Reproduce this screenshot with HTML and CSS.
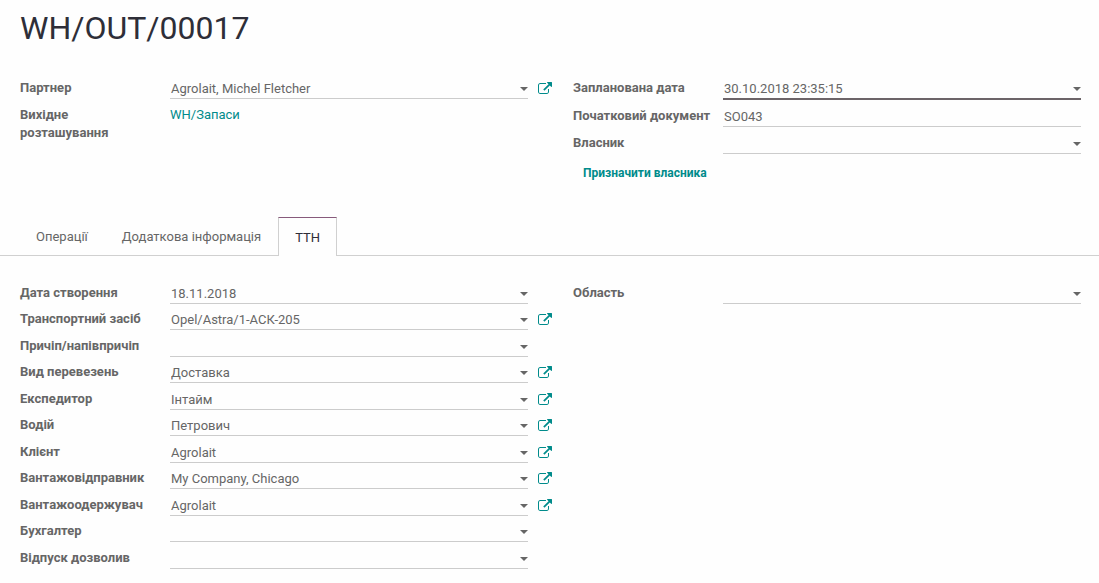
FILE: index.html
```html
<!DOCTYPE html>
<html lang="uk">
<head>
<meta charset="utf-8">
<title>WH/OUT/00017</title>
<link rel="stylesheet" href="styles.css">
</head>
<body>
<svg class="defs" aria-hidden="true">
  <symbol id="external" viewBox="0 0 1792 1792">
    <path d="M1408 928v320q0 119-84.500 203.500t-203.500 84.500h-832q-119 0-203.500-84.500t-84.500-203.500v-832q0-119 84.500-203.500t203.500-84.500h704q14 0 23 9t9 23v64q0 14-9 23t-23 9h-704q-66 0-113 47t-47 113v832q0 66 47 113t113 47h832q66 0 113-47t47-113v-320q0-14 9-23t23-9h64q14 0 23 9t9 23zm384-864v512q0 26-19 45t-45 19-45-19l-176-176-652 652q-10 10-23 10t-23-10l-114-114q-10-10-10-23t10-23l652-652-176-176q-19-19-19-45t19-45 45-19h512q26 0 45 19t19 45z"/>
  </symbol>
</svg>
<main class="sheet">
  <h1 class="title">WH/OUT/00017</h1>

  <section class="groups">
    <div class="group">
      <div class="row">
        <label class="label" for="partner">Партнер</label>
        <div class="field drop"><select class="control" id="partner"><option>Agrolait, Michel Fletcher</option></select></div>
        <button class="open" type="button" aria-label="Відкрити"><svg><use href="#external"/></svg></button>
      </div>
      <div class="row">
        <span class="label label-narrow">Вихідне розташування</span>
        <a class="link" href="#">WH/Запаси</a>
      </div>
    </div>
    <div class="group">
      <div class="row">
        <label class="label" for="planned">Запланована дата</label>
        <div class="field drop required"><input class="control" id="planned" type="text" value="30.10.2018 23:35:15"></div>
      </div>
      <div class="row">
        <label class="label" for="origin">Початковий документ</label>
        <div class="field"><input class="control" id="origin" type="text" value="SO043"></div>
      </div>
      <div class="row">
        <label class="label" for="owner">Власник</label>
        <div class="field drop"><select class="control" id="owner"><option></option></select></div>
      </div>
      <button class="assign" type="button">Призначити власника</button>
    </div>
  </section>

  <nav class="tabs" role="tablist">
    <button class="tab" type="button" role="tab">Операції</button>
    <button class="tab" type="button" role="tab">Додаткова інформація</button>
    <button class="tab active" type="button" role="tab" aria-selected="true">ТТН</button>
  </nav>

  <section class="groups">
    <div class="group dense">
      <div class="row">
        <label class="label" for="created">Дата створення</label>
        <div class="field drop"><input class="control" id="created" type="text" value="18.11.2018"></div>
      </div>
      <div class="row">
        <label class="label" for="vehicle">Транспортний засіб</label>
        <div class="field drop"><select class="control" id="vehicle"><option>Opel/Astra/1-АСК-205</option></select></div>
        <button class="open" type="button" aria-label="Відкрити"><svg><use href="#external"/></svg></button>
      </div>
      <div class="row">
        <label class="label" for="trailer">Причіп/напівпричіп</label>
        <div class="field drop"><select class="control" id="trailer"><option></option></select></div>
      </div>
      <div class="row">
        <label class="label" for="kind">Вид перевезень</label>
        <div class="field drop"><select class="control" id="kind"><option>Доставка</option></select></div>
        <button class="open" type="button" aria-label="Відкрити"><svg><use href="#external"/></svg></button>
      </div>
      <div class="row">
        <label class="label" for="forwarder">Експедитор</label>
        <div class="field drop"><select class="control" id="forwarder"><option>Інтайм</option></select></div>
        <button class="open" type="button" aria-label="Відкрити"><svg><use href="#external"/></svg></button>
      </div>
      <div class="row">
        <label class="label" for="driver">Водій</label>
        <div class="field drop"><select class="control" id="driver"><option>Петрович</option></select></div>
        <button class="open" type="button" aria-label="Відкрити"><svg><use href="#external"/></svg></button>
      </div>
      <div class="row">
        <label class="label" for="client">Клієнт</label>
        <div class="field drop"><select class="control" id="client"><option>Agrolait</option></select></div>
        <button class="open" type="button" aria-label="Відкрити"><svg><use href="#external"/></svg></button>
      </div>
      <div class="row">
        <label class="label" for="sender">Вантажовідправник</label>
        <div class="field drop"><select class="control" id="sender"><option>My Company, Chicago</option></select></div>
        <button class="open" type="button" aria-label="Відкрити"><svg><use href="#external"/></svg></button>
      </div>
      <div class="row">
        <label class="label" for="receiver">Вантажоодержувач</label>
        <div class="field drop"><select class="control" id="receiver"><option>Agrolait</option></select></div>
        <button class="open" type="button" aria-label="Відкрити"><svg><use href="#external"/></svg></button>
      </div>
      <div class="row">
        <label class="label" for="accountant">Бухгалтер</label>
        <div class="field drop"><select class="control" id="accountant"><option></option></select></div>
      </div>
      <div class="row">
        <label class="label" for="release">Відпуск дозволив</label>
        <div class="field drop"><select class="control" id="release"><option></option></select></div>
      </div>
    </div>
    <div class="group">
      <div class="row">
        <label class="label" for="region">Область</label>
        <div class="field drop"><select class="control" id="region"><option></option></select></div>
      </div>
    </div>
  </section>
</main>
</body>
</html>
```
FILE: styles.css
```css
* { box-sizing: border-box; }

body {
  margin: 0;
  background: #fefefe;
  color: #666;
  font: 13px/18px Roboto, "Open Sans", sans-serif;
}

button, input, select { font: inherit; color: inherit; }

button {
  padding: 0;
  border: 0;
  background: none;
  cursor: pointer;
}

.defs { display: none; }

.title {
  margin: 0;
  padding: 8px 20px 31px;
  color: #2e2e38;
  font-size: 32px;
  font-weight: 400;
  line-height: 40px;
}

.groups {
  display: grid;
  grid-template-columns: 1fr 1fr;
  column-gap: 45px;
  padding: 0 18px 0 20px;
}

.group {
  display: flex;
  flex-direction: column;
  gap: 7px;
}

.row {
  display: flex;
  align-items: flex-start;
}

.dense { gap: 0; }
.dense .row { padding-bottom: 7px; }
.dense .row:nth-child(odd) { padding-bottom: 6px; }
.dense .row:last-child { padding-bottom: 0; }

.label {
  flex: 0 0 150px;
  font-weight: 700;
}

.label-narrow { padding-right: 40px; }

.field {
  position: relative;
  flex: 1;
  min-width: 0;
  border-bottom: 1px solid #ccc;
}

.required { border-bottom: 2px solid #6c6468; }

.control {
  display: block;
  width: 100%;
  height: 19px;
  margin: 0;
  padding: 1px 16px 0 1px;
  border: 0;
  outline: 0;
  background: none;
  appearance: none;
  line-height: 18px;
}

input.control { padding: 0 16px 1px 1px; }

.drop::after {
  content: "";
  position: absolute;
  top: 8px;
  right: 0;
  border: 4px solid transparent;
  border-top-color: #666;
  border-bottom: 0;
  pointer-events: none;
}

.open {
  flex: none;
  width: 14px;
  height: 18px;
  margin: 0 -24px 0 10px;
  color: #008b8b;
}

.open svg {
  display: block;
  width: 14px;
  height: 14px;
  margin-top: 2px;
  fill: currentColor;
}

.link {
  color: #008b8b;
  text-decoration: none;
}

.assign {
  align-self: flex-start;
  margin-top: 3px;
  padding-left: 10px;
  color: #008b8b;
  font-size: 12px;
  font-weight: 700;
}

.tabs {
  display: flex;
  margin: 35px 0 28px;
  padding-left: 19px;
  border-bottom: 1px solid #d0d0d0;
}

.tab {
  height: 39px;
  margin-bottom: -1px;
  padding: 0 16px 1px;
  border: 1px solid transparent;
  border-bottom: 0;
}

.tab.active {
  padding: 1px 16px 0;
  border-color: #d0d0d0;
  border-top-color: #875a7b;
  background: #fefefe;
  color: #2e2e38;
}
```
